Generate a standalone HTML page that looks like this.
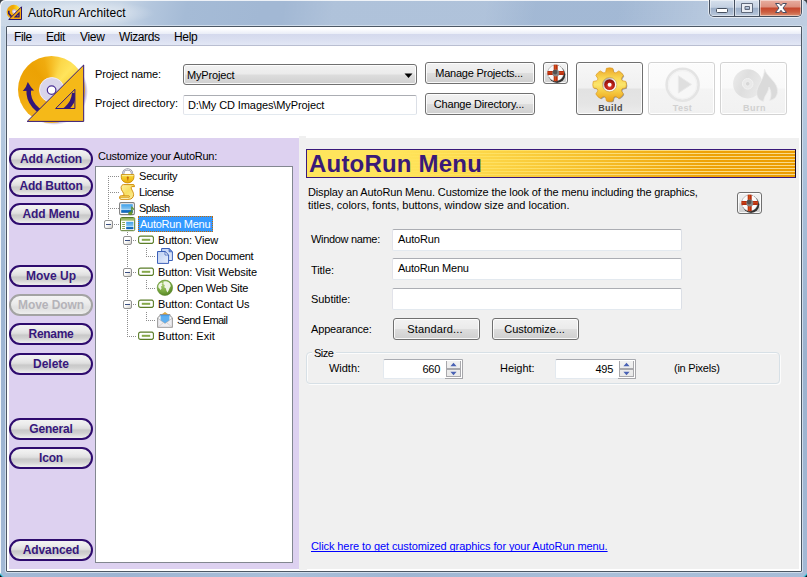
<!DOCTYPE html>
<html>
<head>
<meta charset="utf-8">
<title>AutoRun Architect</title>
<style>
*{box-sizing:border-box;margin:0;padding:0}
html,body{width:807px;height:577px;overflow:hidden;background:#3a3f45}
body{font-family:"Liberation Sans",sans-serif;font-size:11px;color:#000;position:relative}
.abs,.t,.pill,.btn,.inp{position:absolute}
.t{white-space:nowrap;line-height:13px;height:13px}
/* window frame */
#frame{position:absolute;left:0;top:0;width:807px;height:577px;border-radius:5px 5px 4px 4px;
 background:
 linear-gradient(100deg,rgba(255,255,255,0) 0px,rgba(255,255,255,0) 280px,rgba(255,255,255,.14) 330px,rgba(255,255,255,.14) 480px,rgba(255,255,255,0) 530px,rgba(255,255,255,0) 610px,rgba(255,255,255,.22) 700px,rgba(255,255,255,.3) 807px),
 linear-gradient(100deg,#cbd8e7 0px,#c7d5e5 120px,#b3c6dd 150px,#a5bbd6 185px,#a2b8d4 260px,#a3b9d5 807px);
 box-shadow:inset 1px 1px 0 rgba(255,255,255,.8)}
#sideL{left:1px;top:26px;width:5px;height:547px;background:linear-gradient(to bottom,#c3d3e5 0,#b3c7de 20%,#9fb6d3 45%,#9db4d2 75%,#a3b9d5 100%)}
#sideR{left:802px;top:26px;width:5px;height:547px;background:linear-gradient(to bottom,#c0d1e4 0,#a9bfd9 30%,#9bb2ce 60%,#a3b9d5 100%)}
#botG{left:1px;top:572px;width:806px;height:5px;background:linear-gradient(to right,#a3b9d5 0,#9db4d2 15%,#a9bfd9 35%,#9fb6d3 50%,#a9bfd9 75%,#a6bcd7 100%)}
#client{left:5px;top:25px;width:798px;height:548px;background:#fff;border:1px solid #cfdceb;border-radius:2px}
#client:before{content:"";position:absolute;left:0;top:0;right:0;bottom:0;border:1px solid #4c5764;border-radius:1px}
#tglow{left:5px;top:0px;width:150px;height:26px;background:radial-gradient(ellipse closest-side at center,rgba(255,255,255,.42) 0%,rgba(255,255,255,.3) 55%,rgba(255,255,255,0) 100%)}
#title{left:28px;top:6px;font-size:12px;line-height:15px;height:15px;color:#000}
/* caption buttons */
#caps{left:708px;top:-1px;width:95px;height:19px;border:1px solid rgba(255,255,255,.6);border-radius:0 0 6px 6px}
#caps i{position:absolute;left:0;top:0;right:0;bottom:0;border:1px solid #454f5e;border-top:none;border-radius:0 0 5px 5px;overflow:hidden;display:block}
#caps i b{position:absolute;top:0;height:16px;display:block;box-shadow:inset 0 0 0 1px rgba(255,255,255,.45)}
#cmin{left:0;width:25px;background:linear-gradient(to bottom,#d6e0ec 0,#c3d0e1 46%,#9cafc8 50%,#a9bad1 75%,#bccadc 100%);border-right:1px solid #454f5e}
#cmax{left:25px;width:25px;background:linear-gradient(to bottom,#d6e0ec 0,#c3d0e1 46%,#9cafc8 50%,#a9bad1 75%,#bccadc 100%);border-right:1px solid #454f5e}
#ccls{left:50px;width:41px;background:linear-gradient(to bottom,#e8aea1 0,#dc8f7e 44%,#c5462d 50%,#cc5e41 75%,#da8f70 100%)}
/* menu */
#menu{left:7px;top:27px;width:794px;height:19px;background:linear-gradient(to bottom,#ffffff 0,#fdfdff 11%,#f3f5fb 25%,#e9edf7 38.8%,#d4d9ed 38.9%,#d9def0 65%,#e2e7f5 100%);border-bottom:1px solid #b9bed1}
#menu .t{top:3px;font-size:12px;line-height:15px;height:15px}
/* top panel */
.lbl{color:#000}
.btn{border:1px solid #707070;border-radius:3px;background:linear-gradient(to bottom,#f2f2f2 0,#ebebeb 48%,#dddddd 52%,#cfcfcf 100%);box-shadow:inset 0 0 0 1px rgba(255,255,255,.85);text-align:center;font-size:11px;white-space:nowrap}
.inp{background:#fff;border:1px solid #e3e9ef;border-top-color:#abadb3;border-left-color:#e2e3ea;border-right-color:#dbdfe6;border-radius:2px;font-size:11px;white-space:nowrap}
/* left purple panel */
#purple{left:9px;top:138px;width:290px;height:431px;background:#ddd1f0}
.pill{left:9px;width:84px;height:22px;border:2px solid #2e0b6e;border-radius:11px;background:linear-gradient(to bottom,#f3f3f3 0,#ebebeb 25%,#dfdfdf 46%,#c9c9c9 56%,#d0d0d0 72%,#e6e6e6 92%,#ececec 100%);color:#37187c;font-weight:bold;font-size:12px;line-height:18px;text-align:center;white-space:nowrap}
.pill.dis{border-color:#a3a3a3;color:#b5b3b9;background:linear-gradient(to bottom,#f4f4f4 0,#ececec 40%,#e2e2e2 62%,#e4e4e4 80%,#eeeeee 100%)}
#tree{left:95px;top:166px;width:198px;height:397px;background:#fff;border:1px solid #828790}
.ti{position:absolute;white-space:nowrap;line-height:13px;height:13px;font-size:11px}
.dotv{position:absolute;width:1px;background-image:linear-gradient(to bottom,#8c8c8c 50%,rgba(255,255,255,0) 50%);background-size:1px 2px}
.doth{position:absolute;height:1px;background-image:linear-gradient(to right,#8c8c8c 50%,rgba(255,255,255,0) 50%);background-size:2px 1px}
.exp{position:absolute;width:9px;height:9px;border:1px solid #919191;border-radius:2px;background:linear-gradient(135deg,#fff 0,#fff 40%,#d2d0c8 100%)}
.exp:after{content:"";position:absolute;left:1px;top:3px;width:5px;height:1px;background:#3b4f81}
.ico{position:absolute;width:16px;height:16px}
/* right gray panel */
#gray{left:299px;top:138px;width:500px;height:431px;background:#f0f0f0}
#banner{left:306px;top:149px;width:490px;height:29px;border:1px solid #3a1a7a;border-right-color:#1a0d30;
 background:linear-gradient(to right,#ffe55c 0,#ffe55c 18%,#fee063 40%,#fcdc78 65%,#fad98a 100%)}
#banner i{position:absolute;left:0;top:0;right:0;bottom:0;display:block;background:linear-gradient(to right,#ffe55c 0,#ffe55c 18%,#fdd84a 35%,#f6bd27 60%,#eea206 82%,#eb9c00 100%);
 -webkit-mask-image:repeating-linear-gradient(to bottom,rgba(0,0,0,0) 0,rgba(0,0,0,0) 1px,#000 1px,#000 3px);mask-image:repeating-linear-gradient(to bottom,rgba(0,0,0,0) 0,rgba(0,0,0,0) 1px,#000 1px,#000 3px)}
#banner span{position:absolute;left:2px;top:0px;font-size:24px;line-height:27px;font-weight:bold;color:#3a1a78;white-space:nowrap;letter-spacing:.2px}
#grp{left:306px;top:352px;width:474px;height:32px;border:1px solid #d7e0e6;border-radius:4px;box-shadow:inset 1px 1px 0 #fcfcfc,1px 1px 0 #fcfcfc}
.spin{position:absolute;background:#fff;border:1px solid #e3e9ef;border-top-color:#a9abb1;border-right-color:#a6a6aa;border-radius:2px 0 0 2px;height:20px;width:80px}
.spin:after{content:"";position:absolute;right:-1px;bottom:-1px;width:18px;height:1px;background:#a6a6aa}
.spin .v{position:absolute;right:22px;top:3px;line-height:13px;font-size:11px}
.spin .sb{position:absolute;right:1px;top:1px;width:15px;height:16px;border:1px solid #a8a8ac;border-top:none;background:linear-gradient(to bottom,#f1f1f1 0,#e9e9e9 100%)}
.spin .sb:before{content:"";position:absolute;left:0;top:7px;width:13px;height:2px;background:#a9a9ad}
.spin .sb:after{content:"";position:absolute;left:-1px;top:-1px;width:15px;height:1px;background:#fff}
a.lnk{color:#0000ff;text-decoration:underline;text-decoration-skip-ink:none}
.big{position:absolute;border-radius:3px}
.btn.big{background:linear-gradient(to bottom,#f7f7f7 0,#f0f0f0 49%,#e2e2e2 51%,#e5e5e5 80%,#ececec 100%)}
.big.dis{border:1px solid #d3d3d3;background:linear-gradient(to bottom,#fcfcfc 0,#f9f9f9 48%,#f4f4f4 52%,#f1f1f1 100%);box-shadow:inset 0 0 0 1px rgba(255,255,255,.9)}
.bl{font-weight:bold;font-size:9px;letter-spacing:.45px;text-align:center}
</style>
</head>
<body>
<div id="frame"></div>
<div id="sideL" class="abs"></div>
<div id="sideR" class="abs"></div>
<div id="tglow" class="abs"></div>
<svg class="abs" style="left:6px;top:4px" width="18" height="18" viewBox="0 0 18 18">
 <defs><linearGradient id="tg" x1="0" y1="0" x2="1" y2="0"><stop offset="0" stop-color="#f2a60a"/><stop offset=".45" stop-color="#f0a806"/><stop offset=".8" stop-color="#ffe030"/><stop offset="1" stop-color="#f4b818"/></linearGradient></defs>
 <circle cx="7.800" cy="8" r="7.200" fill="url(#tg)"/>
 <circle cx="8.300" cy="7.600" r="2.300" fill="#cfc6ea"/>
 <circle cx="8.300" cy="7.600" r=".9" fill="#fff"/>
 <path d="M2.800 6.800 V9.500 L5.600 12.800" fill="none" stroke="#2a1570" stroke-width="1.600"/>
 <path d="M2.800 15.500 H15.500 V2.800 Z" fill="#f7a90e" stroke="#2a1570" stroke-width="1"/>
 <path d="M9.300 12.800 H13 V9 Z" fill="#e89a10" stroke="#2a1570" stroke-width="1.300"/>
</svg>
<div id="title" class="t" style="letter-spacing:0.096px">AutoRun Architect</div>
<div id="botG" class="abs"></div>
<div class="abs" style="left:803px;top:573px;width:4px;height:4px;background:linear-gradient(135deg,rgba(255,255,255,0) 0,rgba(255,255,255,0) 45%,#4fc6dc 55%,#2aa8c4 70%,#0c0c0c 80%)"></div>
<div class="abs" style="left:0;top:573px;width:4px;height:4px;background:linear-gradient(225deg,rgba(255,255,255,0) 0,rgba(255,255,255,0) 45%,#4fc6dc 55%,#2aa8c4 70%,#0c0c0c 80%)"></div>
<div id="caps" class="abs"><i><b id="cmin"></b><b id="cmax"></b><b id="ccls"></b></i></div>
<svg class="abs" style="left:709px;top:0" width="93" height="17" viewBox="709 0 93 17">
 <rect x="716.5" y="8.500" width="11" height="4" rx="1" fill="#fff" stroke="#46505f" stroke-width="1"/>
 <path d="M741.500 3.500 H752.500 V12.500 H741.500 Z M745 6.500 V9.500 H749.500 V6.500 Z" fill="#e9edf3" fill-rule="evenodd" stroke="#5f697b" stroke-width="1" stroke-linejoin="round"/>
 <path d="M775.500 3.500 H779.300 L781 5.700 L782.700 3.500 H786.500 L783 8 L786.500 12.500 H782.700 L781 10.300 L779.300 12.500 H775.500 L779 8 Z" fill="#fff" stroke="#4a4f63" stroke-width="1" stroke-linejoin="round"/>
</svg>
<div id="client" class="abs"></div>
<div id="menu" class="abs">
 <span class="t" style="letter-spacing:-0.411px;left:7px">File</span>
 <span class="t" style="letter-spacing:-0.447px;left:39px">Edit</span>
 <span class="t" style="letter-spacing:-0.299px;left:73px">View</span>
 <span class="t" style="letter-spacing:-0.406px;left:112px">Wizards</span>
 <span class="t" style="letter-spacing:-0.297px;left:167px">Help</span>
</div>
<!-- logo -->
<div class="abs" style="left:19.500px;top:58px;width:68px;height:67px;border-radius:50%;background:radial-gradient(closest-side,rgba(90,60,170,.0) 80%,rgba(90,60,170,.5) 90%,rgba(90,60,170,.0) 100%)"></div>
<div class="abs" style="left:18.300px;top:56.200px;width:67px;height:67px;border-radius:50%;background:conic-gradient(from 0deg at 50% 50%,#f6bd25 0deg,#fcd84a 20deg,#ffe45c 42deg,#fdd944 62deg,#f5b81c 90deg,#f1ad10 130deg,#f4b51c 180deg,#f3b014 230deg,#eea508 280deg,#eca204 320deg,#f0ab0e 345deg,#f6bd25 360deg)"></div>
<svg class="abs" style="left:14px;top:52px" width="76" height="76" viewBox="14 52 76 76">
 <circle cx="51.8" cy="89.9" r="12.3" fill="#d9d5ea" stroke="#f1edf9" stroke-width="1"/>
 <circle cx="51.6" cy="90.100" r="4.3" fill="#fff" stroke="#4a2f95" stroke-width="1.200"/>
 <path d="M28.700 89.500 A22.800 22.800 0 0 0 74.300 93" fill="none" stroke="#33177a" stroke-width="4.500"/>
 <path d="M22.800 91 Q26.500 87 27.800 82 Q30.500 87 34 90.500 Z" fill="#33177a"/>
 <path d="M27.200 121.400 L83.700 121.400 L83.700 65 Z M55.600 108.500 L74.900 108.500 L74.900 89.300 Z" fill="#f5b918" fill-rule="evenodd" stroke="#33177a" stroke-width="1"/>
</svg>
<div class="t" style="letter-spacing:-0.144px;left:95px;top:68px">Project name:</div>
<div class="t" style="letter-spacing:0.026px;left:95px;top:97px">Project directory:</div>
<div class="btn" style="left:183px;top:64px;width:234px;height:21px;text-align:left"><span class="t" style="letter-spacing:-0.156px;left:3px;top:4px">MyProject</span>
 <svg class="abs" style="left:220px;top:8px" width="9" height="6"><path d="M0.5 0.5 L8.5 0.5 L4.5 5 Z" fill="#000"/></svg></div>
<div class="inp" style="left:183px;top:95px;width:234px;height:20px"><span class="t" style="letter-spacing:-0.098px;left:4px;top:3px">D:\My CD Images\MyProject</span></div>
<div class="btn" style="letter-spacing:-0.229px;left:425px;top:62px;width:110px;height:22px;line-height:21px;padding-right:2px">Manage Projects...</div>
<div class="btn" style="letter-spacing:-0.187px;left:425px;top:93px;width:110px;height:22px;line-height:21px;padding-right:2px">Change Directory...</div>
<div class="btn" style="left:543px;top:62px;width:25px;height:22px"></div>
<svg class="abs" style="left:546px;top:64px" width="20" height="19" viewBox="0 0 20 19"><g>
 <circle cx="11" cy="10.600" r="8.300" fill="#141414" opacity=".85"/>
 <circle cx="9.700" cy="9" r="8" fill="#fbfbfb" stroke="#7a7a7a" stroke-width=".8" stroke-dasharray="1.2 1"/>
 <rect x="7.700" y=".8" width="4" height="16.400" fill="#b62d0e"/>
 <rect x="1.500" y="7" width="16.400" height="4" fill="#b62d0e"/>
 <rect x="8.600" y=".8" width="1.500" height="16.400" fill="#d9581e" opacity=".8"/>
 <rect x="1.500" y="8" width="16.400" height="1.300" fill="#d9581e" opacity=".5"/>
 <circle cx="9.800" cy="9" r="3.500" fill="#858585"/>
 <circle cx="9.100" cy="8.100" r="2.300" fill="#3c3c3c" opacity=".7"/>
</g></svg>
<!-- toolbar buttons -->
<div class="btn big" style="left:576px;top:62px;width:67px;height:53px"></div>
<div class="big dis" style="left:648px;top:62px;width:67px;height:53px"></div>
<div class="big dis" style="left:720px;top:62px;width:67px;height:53px"></div>
<div class="t bl" style="left:577px;top:102px;width:67px;color:#4a4a4a">Build</div>
<div class="t bl" style="left:649px;top:102px;width:67px;color:#d0d0d0">Test</div>
<div class="t bl" style="left:721px;top:102px;width:67px;color:#d0d0d0">Burn</div>
<svg class="abs" style="left:589px;top:64px" width="42" height="42" viewBox="-21 -21 42 42">
 <defs>
  <linearGradient id="gg" x1="0" y1="0" x2="0" y2="1"><stop offset="0" stop-color="#eca526"/><stop offset=".3" stop-color="#f8d552"/><stop offset=".5" stop-color="#fbe56c"/><stop offset=".7" stop-color="#f6cc44"/><stop offset="1" stop-color="#eb9f18"/></linearGradient>
  <radialGradient id="rg" cx=".5" cy=".7" r=".7"><stop offset="0" stop-color="#e8402c"/><stop offset=".6" stop-color="#b01c14"/><stop offset="1" stop-color="#7a0c0c"/></radialGradient>
  <linearGradient id="rr" x1="0" y1="0" x2="1" y2="1"><stop offset="0" stop-color="#8c8c8c"/><stop offset=".5" stop-color="#f2f2f2"/><stop offset="1" stop-color="#ffffff"/></linearGradient>
 </defs>
 <g transform="translate(-0.400,-0.350)">
 <path fill="#3a3a3a" opacity=".45" transform="translate(.9,.9)" d="M-4.97 -12.01 Q-4.23 -12.29 -3.86 -13.04 L-3.17 -16.30 Q0.00 -17.30 3.17 -16.30 L3.86 -13.04 Q4.23 -12.29 4.97 -12.01 Q5.70 -11.68 6.49 -11.95 L9.28 -13.76 Q12.23 -12.23 13.76 -9.28 L11.95 -6.49 Q11.68 -5.70 12.01 -4.97 Q12.29 -4.23 13.04 -3.86 L16.30 -3.17 Q17.30 0.00 16.30 3.17 L13.04 3.86 Q12.29 4.23 12.01 4.97 Q11.68 5.70 11.95 6.49 L13.76 9.28 Q12.23 12.23 9.28 13.76 L6.49 11.95 Q5.70 11.68 4.97 12.01 Q4.23 12.29 3.86 13.04 L3.17 16.30 Q0.00 17.30 -3.17 16.30 L-3.86 13.04 Q-4.23 12.29 -4.97 12.01 Q-5.70 11.68 -6.49 11.95 L-9.28 13.76 Q-12.23 12.23 -13.76 9.28 L-11.95 6.49 Q-11.68 5.70 -12.01 4.97 Q-12.29 4.23 -13.04 3.86 L-16.30 3.17 Q-17.30 0.00 -16.30 -3.17 L-13.04 -3.86 Q-12.29 -4.23 -12.01 -4.97 Q-11.68 -5.70 -11.95 -6.49 L-13.76 -9.28 Q-12.23 -12.23 -9.28 -13.76 L-6.49 -11.95 Q-5.70 -11.68 -4.97 -12.01 Z"/>
 <path fill="url(#gg)" stroke="#dc9a1e" stroke-width=".7" stroke-linejoin="round" d="M-4.97 -12.01 Q-4.23 -12.29 -3.86 -13.04 L-3.17 -16.30 Q0.00 -17.30 3.17 -16.30 L3.86 -13.04 Q4.23 -12.29 4.97 -12.01 Q5.70 -11.68 6.49 -11.95 L9.28 -13.76 Q12.23 -12.23 13.76 -9.28 L11.95 -6.49 Q11.68 -5.70 12.01 -4.97 Q12.29 -4.23 13.04 -3.86 L16.30 -3.17 Q17.30 0.00 16.30 3.17 L13.04 3.86 Q12.29 4.23 12.01 4.97 Q11.68 5.70 11.95 6.49 L13.76 9.28 Q12.23 12.23 9.28 13.76 L6.49 11.95 Q5.70 11.68 4.97 12.01 Q4.23 12.29 3.86 13.04 L3.17 16.30 Q0.00 17.30 -3.17 16.30 L-3.86 13.04 Q-4.23 12.29 -4.97 12.01 Q-5.70 11.68 -6.49 11.95 L-9.28 13.76 Q-12.23 12.23 -13.76 9.28 L-11.95 6.49 Q-11.68 5.70 -12.01 4.97 Q-12.29 4.23 -13.04 3.86 L-16.30 3.17 Q-17.30 0.00 -16.30 -3.17 L-13.04 -3.86 Q-12.29 -4.23 -12.01 -4.97 Q-11.68 -5.70 -11.95 -6.49 L-13.76 -9.28 Q-12.23 -12.23 -9.28 -13.76 L-6.49 -11.95 Q-5.70 -11.68 -4.97 -12.01 Z"/>
 <circle r="7.200" fill="url(#rr)" stroke="#c79a3c" stroke-width=".6"/>
 <circle r="5.400" fill="url(#rg)"/>
 <circle r="2" fill="#fff"/>
 </g>
</svg>
<svg class="abs" style="left:660.500px;top:63px" width="42" height="42" viewBox="-21 -21 42 42">
 <circle cx=".6" cy=".7" r="16" fill="#f7f7f7" stroke="#e4e4e4" stroke-width="2.6"/>
 <circle cx=".6" cy=".7" r="14.2" fill="none" stroke="#f1f1f1" stroke-width="1"/>
 <path d="M-3.6 -8.2 L9.4 0.4 L-3.6 9 Z" fill="#dfdfdf" stroke="#e9e9e9" stroke-width="1" stroke-linejoin="round"/>
</svg>
<svg class="abs" style="left:730px;top:64px" width="52" height="42" viewBox="730 64 52 42">
 <defs><linearGradient id="cdg" x1="0" y1="0" x2="1" y2=".4"><stop offset="0" stop-color="#ececec"/><stop offset=".5" stop-color="#dedede"/><stop offset="1" stop-color="#e8e8e8"/></linearGradient></defs>
 <circle cx="747.7" cy="83.8" r="14.6" fill="url(#cdg)"/>
 <circle cx="747.7" cy="83.8" r="5.3" fill="#e9e9e9" stroke="#f2f2f2" stroke-width="1"/>
 <circle cx="747.7" cy="83.8" r="2.3" fill="#d6d6d6" stroke="#efefef" stroke-width=".8"/>
 <path d="M764.5 69 C766 75 772 78 776 85 C779.5 92 777 99.500 769.500 100.500 C772 96 771 90.500 769 87 C768.500 93 764 95.500 763.500 101.500 C757 100 755.500 94 757.500 88.500 C759.500 83 764.500 77 764.500 69 Z" fill="#dadada" stroke="#ececec" stroke-width=".8"/>
</svg>

<div id="purple" class="abs"></div>
<div class="pill" style="letter-spacing:-0.155px;top:148px">Add Action</div>
<div class="pill" style="letter-spacing:-0.231px;top:175px">Add Button</div>
<div class="pill" style="letter-spacing:-0.125px;top:203px">Add Menu</div>
<div class="pill" style="letter-spacing:-0.002px;top:265px">Move Up</div>
<div class="pill dis" style="letter-spacing:-0.075px;top:294px">Move Down</div>
<div class="pill" style="letter-spacing:-0.315px;top:323px">Rename</div>
<div class="pill" style="letter-spacing:-0.005px;top:353px">Delete</div>
<div class="pill" style="letter-spacing:-0.2px;top:418px">General</div>
<div class="pill" style="letter-spacing:-0.218px;top:447px">Icon</div>
<div class="pill" style="letter-spacing:-0.107px;top:539px">Advanced</div>
<div class="t" style="letter-spacing:-0.249px;left:98px;top:150px">Customize your AutoRun:</div>
<div id="tree" class="abs">
 <!-- coordinates relative to tree (tree origin 96,167 inside border) -->
 <div class="dotv" style="left:12px;top:9px;height:49px"></div>
 <div class="doth" style="left:12px;top:9px;width:11px"></div>
 <div class="doth" style="left:12px;top:25px;width:11px"></div>
 <div class="doth" style="left:12px;top:41px;width:11px"></div>
 <div class="doth" style="left:18px;top:57px;width:5px"></div>
 <div class="dotv" style="left:31px;top:65px;height:105px"></div>
 <div class="doth" style="left:37px;top:73px;width:4px"></div>
 <div class="doth" style="left:37px;top:105px;width:4px"></div>
 <div class="doth" style="left:37px;top:137px;width:4px"></div>
 <div class="doth" style="left:31px;top:169px;width:10px"></div>
 <div class="dotv" style="left:50px;top:81px;height:8px"></div>
 <div class="doth" style="left:50px;top:89px;width:10px"></div>
 <div class="dotv" style="left:50px;top:113px;height:8px"></div>
 <div class="doth" style="left:50px;top:121px;width:10px"></div>
 <div class="dotv" style="left:50px;top:145px;height:8px"></div>
 <div class="doth" style="left:50px;top:153px;width:10px"></div>
 <div class="exp" style="left:8px;top:53px"></div>
 <div class="exp" style="left:27px;top:69px"></div>
 <div class="exp" style="left:27px;top:101px"></div>
 <div class="exp" style="left:27px;top:133px"></div>
 <div class="sel" style="position:absolute;left:42px;top:49px;width:75px;height:16px;background:#3399ff;border:1px dotted #c66a00"></div>
 <div class="ti" style="letter-spacing:-0.169px;left:43px;top:3px">Security</div>
 <div class="ti" style="letter-spacing:-0.46px;left:43px;top:19px">License</div>
 <div class="ti" style="letter-spacing:-0.523px;left:43px;top:35px">Splash</div>
 <div class="ti" style="letter-spacing:-0.258px;left:44px;top:51px;color:#fff">AutoRun Menu</div>
 <div class="ti" style="letter-spacing:-0.13px;left:62px;top:67px">Button: View</div>
 <div class="ti" style="letter-spacing:-0.285px;left:81px;top:83px">Open Document</div>
 <div class="ti" style="letter-spacing:-0.095px;left:62px;top:99px">Button: Visit Website</div>
 <div class="ti" style="letter-spacing:-0.247px;left:81px;top:115px">Open Web Site</div>
 <div class="ti" style="letter-spacing:-0.046px;left:62px;top:131px">Button: Contact Us</div>
 <div class="ti" style="letter-spacing:-0.597px;left:81px;top:147px">Send Email</div>
 <div class="ti" style="letter-spacing:0.045px;left:62px;top:163px">Button: Exit</div>
 <!-- lock: abs 120..135 x 168..184 => rel 24,1 -->
 <svg class="ico" style="left:24px;top:1px" viewBox="0 0 16 16">
  <defs><linearGradient id="lk" x1="0" y1="0" x2="0" y2="1"><stop offset="0" stop-color="#fbe56a"/><stop offset=".35" stop-color="#f4cc2a"/><stop offset="1" stop-color="#e9a90a"/></linearGradient></defs>
  <path d="M3.100 7 V5.900 A4.500 4.500 0 0 1 12.100 5.900 V7" fill="none" stroke="#8e8e9e" stroke-width="2.300"/>
  <path d="M3.100 7 V5.900 A4.500 4.500 0 0 1 12.100 5.900 V7" fill="none" stroke="#eeeef4" stroke-width=".9"/>
  <path d="M1.300 6.600 H13.900 V9.300 A6.300 5.600 0 0 1 1.300 9.300 Z" fill="url(#lk)" stroke="#c98d08" stroke-width=".9"/>
  <path d="M2 7.500 H13.600" stroke="#fdf2a8" stroke-width=".8"/>
  <circle cx="7.8" cy="9.7" r="1.1" fill="#c66a0a"/><rect x="7.300" y="10" width="1" height="2.500" fill="#c66a0a"/>
 </svg>
<!-- scroll: abs 119..135 x 184..200 => rel 23,17 -->
 <svg class="ico" style="left:23px;top:17px" viewBox="0 0 16 16">
  <defs><linearGradient id="sc" x1="0" y1="0" x2="1" y2="1"><stop offset="0" stop-color="#fdf3b0"/><stop offset=".5" stop-color="#f8df62"/><stop offset="1" stop-color="#fbeea0"/></linearGradient></defs>
  <path d="M4.500 .6 H14.800 L15.600 2.600 H12.700 C11 4.500 14.700 7.500 14.600 10.600 C14.500 13.600 12.500 15.200 10.300 15.300 H2 C.500 15.300 .1 13.200 .9 12.300 C1.300 11.800 2 11.700 2.600 11.700 H5 C5.500 8.500 1.800 6.800 2.100 3.600 C2.300 1.800 3.200 .7 4.500 .6 Z" fill="url(#sc)" stroke="#d18d0c" stroke-width="1"/>
  <path d="M1.200 13.300 H9.800 C10.700 13.300 10.800 12 10 11.800 H5" fill="none" stroke="#d18d0c" stroke-width=".9"/>
  <path d="M1.800 14.300 H9.500" stroke="#fff9d8" stroke-width=".9"/>
 </svg>
<!-- splash: abs 119..135 x 202..215 => rel 23,35 -->
 <svg class="ico" style="left:23px;top:34px" viewBox="0 0 16 16">
  <defs><linearGradient id="sp" x1="0" y1="0" x2="0" y2="1"><stop offset="0" stop-color="#3f9fe9"/><stop offset=".5" stop-color="#7cc0f0"/><stop offset=".68" stop-color="#c4e2f7"/><stop offset=".72" stop-color="#1a78c8"/><stop offset="1" stop-color="#0a5cb0"/></linearGradient></defs>
  <rect x=".6" y="1.600" width="14.800" height="12" rx="1.300" fill="#fff" stroke="#7f7f7f" stroke-width="1.100"/>
  <rect x="2.200" y="3.200" width="11.600" height="8.600" fill="url(#sp)"/>
  <path d="M12.600 5.500 L14.600 7.300 V9 L13.200 7.600 V12.300 A1.900 1.500 0 1 1 12.200 11.100 Z" fill="#6a9c2c" stroke="#4e7a1c" stroke-width=".4"/>
 </svg>
<!-- menu icon: abs 120..135 x 217..231 => rel 24,50 -->
 <svg class="ico" style="left:24px;top:50px" viewBox="0 0 16 16">
  <rect x=".500" y=".500" width="14.200" height="13.200" rx="1.200" fill="#fff" stroke="#587a26" stroke-width="1"/>
  <rect x="1" y="1" width="13.200" height="2.600" fill="#8fae56"/>
  <rect x="1" y="1.900" width="13.200" height=".8" fill="#a9c276"/>
  <path d="M2.200 5.500 H5 M2.200 7.500 H5 M2.200 9.500 H5 M2.200 11.500 H5" stroke="#7b9c40" stroke-width=".9"/>
  <rect x="6.200" y="4.800" width="7.200" height="7.400" fill="url(#sp)"/>
 </svg>
<!-- button icons: abs 138..154 x 236..245 => rel 42, 69 (+32,+64,+96) -->
 <svg class="abs" style="left:42px;top:68px" width="16" height="10" viewBox="0 0 16 10"><path d="M2.600 1.100 H14.200 L15.400 2.300 V7.200 L14.200 8.400 H2.600 Q.6 8.400 .6 6.400 V3.100 Q.6 1.100 2.600 1.100 Z" fill="#fff" stroke="#5b7d28" stroke-width="1.100"/><rect x="3.800" y="3.800" width="8.400" height="2" fill="#86a94a"/></svg>
 <svg class="abs" style="left:42px;top:100px" width="16" height="10" viewBox="0 0 16 10"><path d="M2.600 1.100 H14.200 L15.400 2.300 V7.200 L14.200 8.400 H2.600 Q.6 8.400 .6 6.400 V3.100 Q.6 1.100 2.600 1.100 Z" fill="#fff" stroke="#5b7d28" stroke-width="1.100"/><rect x="3.800" y="3.800" width="8.400" height="2" fill="#86a94a"/></svg>
 <svg class="abs" style="left:42px;top:132px" width="16" height="10" viewBox="0 0 16 10"><path d="M2.600 1.100 H14.200 L15.400 2.300 V7.200 L14.200 8.400 H2.600 Q.6 8.400 .6 6.400 V3.100 Q.6 1.100 2.600 1.100 Z" fill="#fff" stroke="#5b7d28" stroke-width="1.100"/><rect x="3.800" y="3.800" width="8.400" height="2" fill="#86a94a"/></svg>
 <svg class="abs" style="left:42px;top:164px" width="16" height="10" viewBox="0 0 16 10"><path d="M2.600 1.100 H14.200 L15.400 2.300 V7.200 L14.200 8.400 H2.600 Q.6 8.400 .6 6.400 V3.100 Q.6 1.100 2.600 1.100 Z" fill="#fff" stroke="#5b7d28" stroke-width="1.100"/><rect x="3.800" y="3.800" width="8.400" height="2" fill="#86a94a"/></svg>
<!-- documents: abs 157..173 x 248..264 => rel 61,81 -->
 <svg class="ico" style="left:61px;top:81px" viewBox="0 0 16 16">
  <defs><linearGradient id="dc" x1="0" y1="0" x2="1" y2="1"><stop offset="0" stop-color="#bccff2"/><stop offset="1" stop-color="#e9effc"/></linearGradient></defs>
  <path d="M4.600 .500 H12 L15.400 3.800 V12.500 H4.600 Z" fill="url(#dc)" stroke="#3b60b8" stroke-width="1"/>
  <path d="M12 .500 V3.800 H15.400 Z" fill="#6f90d8" stroke="#3b60b8" stroke-width=".7"/>
  <path d="M.500 3.500 H8 L11.600 7 V15.400 H.500 Z" fill="url(#dc)" stroke="#3b60b8" stroke-width="1"/>
  <path d="M8 3.500 V7 H11.600 Z" fill="#fff" stroke="#3b60b8" stroke-width=".8"/>
 </svg>
<!-- globe: center abs 164.9,287.8 r 7.8 => rel 68.9,120.8 -->
 <svg class="abs" style="left:60px;top:112px" width="18" height="18" viewBox="0 0 18 18">
  <defs><radialGradient id="gl" cx=".4" cy=".3" r=".75"><stop offset="0" stop-color="#a6cc72"/><stop offset=".6" stop-color="#78a83e"/><stop offset="1" stop-color="#527f24"/></radialGradient></defs>
  <circle cx="8.900" cy="8.800" r="7.700" fill="url(#gl)" stroke="#5d8a2c" stroke-width=".6"/>
  <path d="M2.300 6.800 C3 5 4.200 4 5.600 3.600 L6.600 4.600 L5.600 5.600 L6.400 6.600 L5 7.600 L5.600 9.400 L4.600 11 L3.400 9.600 L2.400 8.600 Z" fill="#f4f8ee" opacity=".95"/>
  <path d="M7.600 2.600 L10 2.200 L12.400 3 L14 4.600 L14.800 7 L13.600 9 L12.600 11.600 L11.400 13.600 L10.400 11.600 L9.800 9.200 L8.200 8.200 L8.800 6.200 L7.400 5 Z" fill="#f4f8ee" opacity=".95"/>
 </svg>
<!-- email: abs 157..173 x 312..328 => rel 61,145 -->
 <svg class="ico" style="left:61px;top:145px" viewBox="0 0 16 16">
  <path d="M8 .3 L11 2.500 H5 Z" fill="#e6b23c" stroke="#c9922a" stroke-width=".5"/>
  <path d="M.6 5.800 L3 3.600 V2.600 H13 V3.600 L15.400 5.800 V15.300 H.6 Z" fill="#f4f4f6" stroke="#8b8b8b" stroke-width="1"/>
  <path d="M3.600 3 H12.400 V9 L8 11.500 L3.600 9 Z" fill="#5fb0f0"/>
  <path d="M3.600 3 H12.400 V4.200 H3.600 Z" fill="#4a9fe6"/>
  <path d="M.8 6.200 L8 11.600 L15.200 6.200 V15.200 H.8 Z" fill="#ededf1" stroke="#9a9a9a" stroke-width=".5"/>
  <path d="M1 15 L6.500 10.600 M15 15 L9.500 10.600" stroke="#c9bfb8" stroke-width=".6"/>
 </svg>

</div>

<div id="gray" class="abs"></div>
<div class="abs" style="left:299px;top:136px;width:7px;height:2px;background:#f0f0f0"></div>
<div class="abs" style="left:299px;top:569px;width:8px;height:1px;background:#f0f0f0"></div>
<div id="banner" class="abs"><i></i><span>AutoRun Menu</span></div>
<div class="t" style="letter-spacing:-0.137px;left:308px;top:186px">Display an AutoRun Menu. Customize the look of the menu including the graphics,</div>
<div class="t" style="letter-spacing:0.007px;left:308px;top:199px">titles, colors, fonts, buttons, window size and location.</div>
<div class="btn" style="left:737px;top:192px;width:25px;height:22px"></div>
<svg class="abs" style="left:740px;top:194px" width="20" height="19" viewBox="0 0 20 19"><g>
 <circle cx="11" cy="10.600" r="8.300" fill="#141414" opacity=".85"/>
 <circle cx="9.700" cy="9" r="8" fill="#fbfbfb" stroke="#7a7a7a" stroke-width=".8" stroke-dasharray="1.2 1"/>
 <rect x="7.700" y=".8" width="4" height="16.400" fill="#b62d0e"/>
 <rect x="1.500" y="7" width="16.400" height="4" fill="#b62d0e"/>
 <rect x="8.600" y=".8" width="1.500" height="16.400" fill="#d9581e" opacity=".8"/>
 <rect x="1.500" y="8" width="16.400" height="1.300" fill="#d9581e" opacity=".5"/>
 <circle cx="9.800" cy="9" r="3.500" fill="#858585"/>
 <circle cx="9.100" cy="8.100" r="2.300" fill="#3c3c3c" opacity=".7"/>
</g></svg>
<div class="t" style="letter-spacing:-0.322px;left:311px;top:233px">Window name:</div>
<div class="t" style="letter-spacing:-0.073px;left:311px;top:264px">Title:</div>
<div class="t" style="letter-spacing:-0.061px;left:311px;top:293px">Subtitle:</div>
<div class="t" style="letter-spacing:-0.154px;left:311px;top:323px">Appearance:</div>
<div class="inp" style="left:392px;top:229px;width:290px;height:22px"><span class="t" style="letter-spacing:-0.159px;left:5px;top:3px">AutoRun</span></div>
<div class="inp" style="left:392px;top:258px;width:290px;height:22px"><span class="t" style="letter-spacing:-0.224px;left:5px;top:3px">AutoRun Menu</span></div>
<div class="inp" style="left:392px;top:288px;width:290px;height:22px"></div>
<div class="btn" style="letter-spacing:0.152px;left:393px;top:318px;width:87px;height:22px;line-height:21px;padding-right:3px">Standard...</div>
<div class="btn" style="letter-spacing:-0.053px;left:492px;top:318px;width:87px;height:22px;line-height:21px;padding-right:2px">Customize...</div>
<div id="grp" class="abs"></div>
<div class="t" style="letter-spacing:-0.477px;left:312px;top:347px;background:#f0f0f0;padding:0 2px">Size</div>
<div class="t" style="letter-spacing:-0.031px;left:329px;top:362px">Width:</div>
<div class="spin" style="left:383px;top:359px"><span class="v" style="letter-spacing:-0.286px">660</span><div class="sb"><svg class="abs" style="left:3px;top:1px" width="7" height="14" viewBox="0 0 7 14"><path d="M3.500 .8 L6.600 4.200 H.4 Z M.4 9.800 H6.600 L3.500 13.200 Z" fill="#4a62b4"/></svg></div></div>
<div class="t" style="letter-spacing:-0.051px;left:500px;top:362px">Height:</div>
<div class="spin" style="left:555px;top:359px;width:81px"><span class="v" style="letter-spacing:-0.286px">495</span><div class="sb"><svg class="abs" style="left:3px;top:1px" width="7" height="14" viewBox="0 0 7 14"><path d="M3.500 .8 L6.600 4.200 H.4 Z M.4 9.800 H6.600 L3.500 13.200 Z" fill="#4a62b4"/></svg></div></div>
<div class="t" style="letter-spacing:-0.245px;left:674px;top:362px">(in Pixels)</div>
<div class="t" style="left:311px;top:540px"><a class="lnk" style="letter-spacing:-0.091px">Click here to get customized graphics for your AutoRun menu.</a></div>

</body>
</html>
